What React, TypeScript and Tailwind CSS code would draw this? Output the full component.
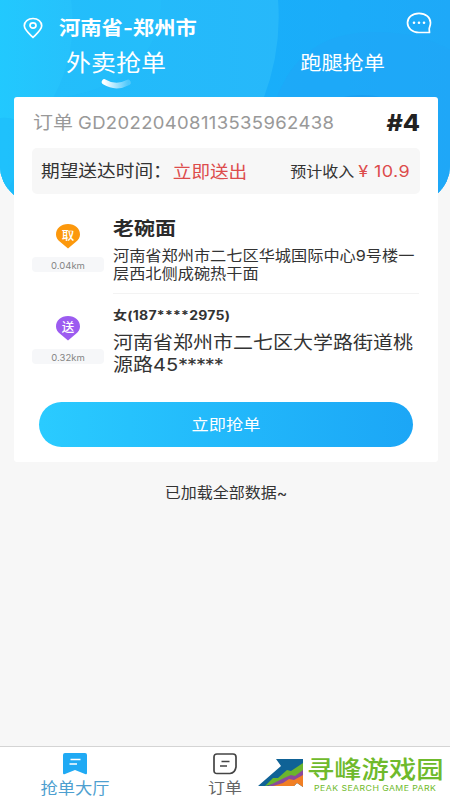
import React from "react";

const font =
  "font-['Inter','Noto_Sans_CJK_SC',sans-serif] antialiased";

function T({ className = "", children }: { className?: string; children: React.ReactNode }) {
  return (
    <span className={`inline-block shrink-0 whitespace-nowrap leading-none scale-y-[0.89] ${className}`}>
      {children}
    </span>
  );
}

function Header() {
  return (
    <header className="relative h-[206px] overflow-hidden rounded-b-[45px_40px] bg-linear-to-r from-[#24c6fd] to-[#1da7f6]">
      <svg className="absolute inset-0" width="450" height="206" viewBox="0 0 450 206">
        <defs>
          <linearGradient id="left" x1="0" x2="1">
            <stop offset="0" stopColor="#22cbff" />
            <stop offset="1" stopColor="#27c2fc" />
          </linearGradient>
          <linearGradient id="middle" x1="0" x2="1">
            <stop offset="0" stopColor="#1fbdfb" />
            <stop offset="1" stopColor="#27b8fa" />
          </linearGradient>
          <linearGradient id="right" x1="0" x2="1">
            <stop offset="0" stopColor="#18affa" />
            <stop offset="1" stopColor="#1ea9f8" />
          </linearGradient>
          <linearGradient id="smile" x1="0" x2="1">
            <stop offset="0" stopColor="#fff" />
            <stop offset="1" stopColor="#fff" stopOpacity="0.2" />
          </linearGradient>
        </defs>
        <rect x="240" width="210" height="206" fill="url(#right)" />
        <path d="M0 0H278Q282 50 263 100V206H0Z" fill="url(#middle)" />
        <path d="M0 0H161Q162 42 130 70Q100 94 53 98L0 206Z" fill="#29c3fd" opacity=".3" />
        <path d="M0 0H71Q78 52 53 98L0 206Z" fill="url(#left)" opacity=".8" />
        <path d="M0 118Q9 117 16 120V206H0Z" fill="#1cb9fa" opacity=".5" />
        <path d="M276 100Q300 32 374 32Q420 32 450 50V206H276Z" fill="#20a6f7" opacity=".6" />
        <ellipse cx="362" cy="136" rx="60" ry="41" fill="#168fe4" opacity=".35" />
        <path d="M104.500 82Q116 89 128 82.500" fill="none" stroke="url(#smile)" strokeWidth="5.500" strokeLinecap="round" />
      </svg>
      <div className="relative flex h-[53px] items-center pl-[23px] pr-[18px] text-white">
        <svg className="mt-[3px]" width="20" height="22" viewBox="0 0 20 22" fill="none" stroke="white" strokeWidth="1.700">
          <path d="M10 20.500C6 16.500 1.300 12.700 1.300 8.800C1.300 4.500 5 1.500 10 1.500S18.700 4.500 18.700 8.800C18.700 12.700 14 16.500 10 20.500Z" strokeLinejoin="round" />
          <ellipse cx="10" cy="8.500" rx="3" ry="2.600" />
        </svg>
        <T className="ml-[16px] mt-[4px] text-[21.300px] font-bold">河南省-郑州市</T>
        <svg className="mb-[7px] ml-auto" width="26" height="22" viewBox="0 0 26 22">
          <path d="M23.500 20.500H13C6 20.500 1.500 16 1.500 10.800C1.500 5.500 6 1.300 13 1.300S24.500 5.500 24.500 10.800C24.500 13.500 23.200 15.500 23.200 17Z" fill="none" stroke="white" strokeWidth="1.700" strokeLinejoin="round" />
          <circle cx="8" cy="10.700" r="1.300" fill="white" />
          <circle cx="13" cy="10.700" r="1.300" fill="white" />
          <circle cx="18" cy="10.700" r="1.300" fill="white" />
        </svg>
      </div>
      <div className="relative -mt-[3px] flex h-[26px] items-center justify-between pl-[66px] pr-[65px] text-white">
        <T className="text-[25px]">外卖抢单</T>
        <T className="mt-[2px] text-[21.200px]">跑腿抢单</T>
      </div>
    </header>
  );
}

function Stop({ label, fill, distance }: { label: string; fill: string; distance: string }) {
  return (
    <div className="flex w-[72px] shrink-0 flex-col items-center">
      <svg width="26" height="26" viewBox="0 0 26 26">
        <path d="M13 25.500L5 18.800C2.500 16.800 1 14.500 1 11.500C1 5.500 6 1 13 1S25 5.500 25 11.500C25 14.500 23.500 16.800 21 18.800Z" fill={fill} />
        <text x="13" y="16.800" textAnchor="middle" fontSize="12.500" fill="white" fontFamily="Noto Sans CJK SC, sans-serif" fontWeight="500">{label}</text>
      </svg>
      <div className="mt-[8px] flex h-[15px] w-full items-center justify-center rounded-[4px] bg-[#f6f7f9] pt-[2px] text-[#858585]">
        <T className="text-[9.500px]">{distance}</T>
      </div>
    </div>
  );
}

function Card() {
  return (
    <main className="relative mx-[14px] -mt-[109px] h-[365px] w-[424px] rounded-[3px] bg-white px-[18px] text-[#333]">
      <div className="flex h-[51px] items-center justify-between text-[#999]">
        <div className="flex items-center">
          <T className="ml-[1px] text-[20px]">订单</T>
          <T className="ml-[5px] text-[18.500px] tracking-[0.350px] scale-y-[0.96]">GD20220408113535962438</T>
        </div>
        <T className="mt-[2px] text-[25px] font-extrabold text-[#222]">#4</T>
      </div>
      <div className="flex h-[46px] items-center rounded-[5px] bg-[#f7f7f7] pl-[9px] pr-[10px] pt-[2px]">
        <T className="text-[18.700px]">期望送达时间：</T>
        <T className="ml-[1px] text-[18.600px] text-[#dd4c4c]">立即送出</T>
        <T className="ml-auto text-[16px]">预计收入</T>
        <T className="ml-[4px] text-[18px] tracking-[0.400px] text-[#dd4c4c]">¥ 10.9</T>
      </div>
      <section className="flex h-[100px] gap-[9px]">
        <div className="pt-[29px]">
          <Stop label="取" fill="#fc980c" distance="0.04km" />
        </div>
        <div className="flex w-[306px] flex-col items-start border-b border-[#f3f3f3] pt-[24px]">
          <T className="text-[21px] font-bold text-[#2b2b2b]">老碗面</T>
          <T className="mt-[9px] text-[16.200px]">河南省郑州市二七区华城国际中心9号楼一</T>
          <T className="mt-[2px] text-[16.200px]">层西北侧成碗热干面</T>
        </div>
      </section>
      <section className="flex h-[108px] gap-[9px]">
        <div className="pt-[21px]">
          <Stop label="送" fill="#9c5cf0" distance="0.32km" />
        </div>
        <div className="flex w-[306px] flex-col items-start pt-[15px]">
          <T className="text-[14px] font-bold tracking-[0.250px]">女(187****2975)</T>
          <T className="mt-[10px] text-[20px]">河南省郑州市二七区大学路街道桃</T>
          <T className="mt-[2px] text-[20px] tracking-[-1.100px]"><span className="tracking-normal">源路45</span>*****</T>
        </div>
      </section>
      <button className="ml-[7px] flex h-[45px] w-[374px] items-center justify-center rounded-full bg-linear-to-r from-[#2acbff] to-[#1ca6f6] text-white">
        <T className="text-[17.200px]">立即抢单</T>
      </button>
    </main>
  );
}

function Logo() {
  return (
    <div className="flex items-start">
      <svg className="mt-[11px]" width="47" height="31" viewBox="0 0 47 31">
        <path d="M18 1H45V29L39 25L36 28H0L23 8Z" fill="#0f6296" />
        <path d="M7 28L15 20L20 20L29 12L33 13L45 5V14L34 22Z" fill="#6bb52d" />
        <path d="M10 28L20 23L26 20L33 17L37 18L45 12V19L32 24L16 28Z" fill="#8b4a9c" />
        <path d="M15 28L25 25L31 21L36 22L45 17V29L39 25L36 28Z" fill="#f17f24" />
      </svg>
      <div className="flex flex-col items-center pl-[2px] pt-[9px] text-[#6fba2c]">
        <T className="text-[27.300px] font-medium">寻峰游戏园</T>
        <T className="mt-[1px] text-[8.700px] tracking-[0.450px]">PEAK SEARCH GAME PARK</T>
      </div>
    </div>
  );
}

export default function App() {
  return (
    <div className={`${font} flex h-[800px] w-[450px] flex-col overflow-hidden bg-[#f7f7f7]`}>
      <Header />
      <Card />
      <div className="mt-[19px] pl-[2px] text-center text-[#333]">
        <T className="text-[16px]">已加载全部数据~</T>
      </div>
      <nav className="mt-auto flex h-[54px] border-t border-[#d4d4d4] bg-white">
        <div className="flex w-[150px] flex-col items-center pt-[6px] text-[#4e9fd0]">
          <svg width="24" height="22" viewBox="0 0 24 22">
            <path d="M2 0H22Q24 0 24 2V20Q24 22 22 21L12 17L2 21Q0 22 0 20V2Q0 0 2 0Z" fill="#20aaf4" />
            <path d="M7.500 6.500H17.500M6.500 11H14" stroke="white" strokeWidth="1.300" />
          </svg>
          <T className="mt-[5px] text-[17.300px]">抢单大厅</T>
        </div>
        <div className="flex w-[150px] flex-col items-center pt-[6px] text-[#666]">
          <svg width="24" height="22" viewBox="0 0 24 22" fill="none" stroke="#444" strokeWidth="1.700">
            <path d="M4 1H20Q23 1 23 4V14Q22 20 17 20.500H4Q1 20.500 1 17.500V4Q1 1 4 1Z" strokeLinejoin="round" />
            <path d="M8.500 8.500H16.500M7 13H14" />
          </svg>
          <T className="mt-[5px] text-[17px]">订单</T>
        </div>
        <div className="-ml-[42px]">
          <Logo />
        </div>
      </nav>
    </div>
  );
}
